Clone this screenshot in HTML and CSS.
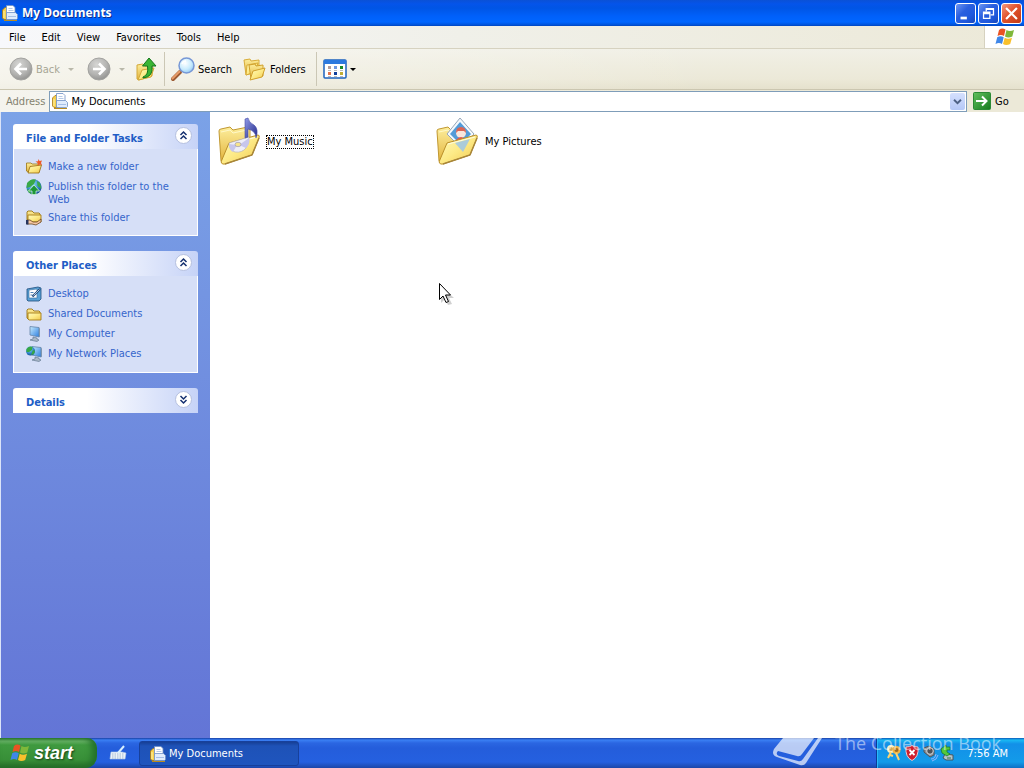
FILE: index.html
```html
<!DOCTYPE html>
<html lang="en">
<head>
<meta charset="utf-8">
<meta name="viewport" content="width=device-width, initial-scale=1">
<title>My Documents</title>
<link rel="stylesheet" href="styles.css">
</head>
<body>
<svg class="defs" aria-hidden="true">
  <defs>
    <linearGradient id="gold" x1="0" y1="0" x2="1" y2="1"><stop offset="0" stop-color="#fffbc0"/><stop offset=".5" stop-color="#fdea86"/><stop offset="1" stop-color="#f0c74c"/></linearGradient>
    <linearGradient id="gold-back" x1="0" y1="0" x2="0" y2="1"><stop offset="0" stop-color="#fdee9c"/><stop offset="1" stop-color="#e2b23a"/></linearGradient>
    <radialGradient id="grey-ball" cx=".4" cy=".3" r=".75"><stop offset="0" stop-color="#d6d6d4"/><stop offset=".6" stop-color="#b4b4b2"/><stop offset="1" stop-color="#8f8f8d"/></radialGradient>
    <radialGradient id="lens" cx=".4" cy=".35" r=".7"><stop offset="0" stop-color="#fff"/><stop offset=".6" stop-color="#c8ebfd"/><stop offset="1" stop-color="#8fc6f2"/></radialGradient>
    <linearGradient id="green" x1="0" y1="0" x2="1" y2="1"><stop offset="0" stop-color="#62c05e"/><stop offset="1" stop-color="#157a1d"/></linearGradient>
    <radialGradient id="globe" cx=".4" cy=".3" r=".8"><stop offset="0" stop-color="#8fe0f5"/><stop offset=".6" stop-color="#2d7fc8"/><stop offset="1" stop-color="#123f7e"/></radialGradient>
    <linearGradient id="screen" x1="0" y1="0" x2="1" y2="1"><stop offset="0" stop-color="#c9ecff"/><stop offset="1" stop-color="#2c7fe0"/></linearGradient>
    <linearGradient id="note" x1="0" y1="0" x2="1" y2="1"><stop offset="0" stop-color="#8f9ae6"/><stop offset="1" stop-color="#252b8c"/></linearGradient>
  </defs>
  <symbol id="docs" viewBox="0 0 16 16">
    <path d="M.5 5L3 2.500h3v12H2L.5 13z" fill="#f7cf4a" stroke="#a87a16" stroke-width=".8"/>
    <path d="M2 6v7" stroke="#fff3a8"/>
    <path d="M4.500.5h6.500l2 2V9H4.500z" fill="#fff" stroke="#6f8fc4" stroke-width=".8"/>
    <path d="M6.500 3.500h4M6.500 5.500h5" stroke="#b6c9e6"/>
    <path d="M4.500 7.500h9l2 2v4l-1 1h-10z" fill="#dfebfc" stroke="#6f8fc4" stroke-width=".8"/>
    <path d="M6 11.500h8" stroke="#a5bfe6"/>
    <path d="M2 15.500h13" stroke="#b98b20"/>
  </symbol>
  <symbol id="folder" viewBox="0 0 16 16">
    <path d="M1 4l1-1h4l2 2h5l1 1v7H2l-1-1z" fill="url(#gold-back)" stroke="#9b7412" stroke-width=".9"/>
    <path d="M2 7h13v7H3L2 13z" fill="url(#gold)" stroke="#a67d19" stroke-width=".9"/>
  </symbol>
  <symbol id="open-folder" viewBox="0 0 16 16">
    <path d="M.5 4h4.500l1 1h7v8H2L.5 12z" fill="url(#gold-back)" stroke="#9b7412" stroke-width=".8"/>
    <path d="M4 7.500L15.500 6 13 14H2z" fill="url(#gold)" stroke="#94690e" stroke-width=".8"/>
  </symbol>
  <symbol id="flag" viewBox="0 0 20 20">
    <path d="M4 3q3-2.500 6.500-.5L9 9q-3-2-6.500 0z" fill="#ea5323"/>
    <path d="M11.500 3q3 2 7.500 0L17.300 9.500q-4 2-7.300 0z" fill="#7fb83a"/>
    <path d="M2.200 10.200q3.300-2 6.500 0L7 17q-3-2-6.500 0z" fill="#3f87e8"/>
    <path d="M9.700 10.700q3.300 2 7.300 0L15.200 17q-4 2-7.200 0z" fill="#f9c02c"/>
  </symbol>
  <symbol id="monitor" viewBox="0 0 16 16">
    <path d="M4 .5l9 1v9.500l-9-2z" fill="url(#screen)" stroke="#6384a9" stroke-width=".8"/>
    <path d="M13 1.500l1 1v8l-1 1z" fill="#7f95ad"/>
    <path d="M7 11l4 1v1l2 1-2 1.500-7-1.500 3-1z" fill="#aab8c8" stroke="#586e86" stroke-width=".6"/>
  </symbol>
  <symbol id="big-folder" viewBox="0 0 44 48">
    <path d="M1 13q0-2 2-2l9-2 3 3 15-3q2 0 2 3v20L7 45l-4-2z" fill="url(#gold-back)" stroke="#c19831"/>
    <path d="M3 14l9-2 3 3 14-3" fill="none" stroke="#fff8c8"/>
  </symbol>
  <symbol id="big-front" viewBox="0 0 44 48">
    <path d="M11 25l29-8q2 0 1 3l-7 17-27 9q-3 1-4-2z" fill="url(#gold)" stroke="#bb902a"/>
    <path d="M12 26l27-7" stroke="#fffce0"/>
    <path d="M7 46l27-9 7-17" fill="none" stroke="#a8863a" stroke-width="1.500"/>
  </symbol>
</svg>

<header class="titlebar">
  <svg class="icon16"><use href="#docs"/></svg>
  <h1 class="title">My Documents</h1>
  <button class="winbtn" aria-label="Minimize"><svg viewBox="0 0 21 21"><path d="M5 14h7v3H5z" fill="#fff"/></svg></button>
  <button class="winbtn" aria-label="Restore"><svg viewBox="0 0 21 21" fill="none" stroke="#fff" stroke-width="1.400"><path d="M8 8V5h8v7h-3M8 6h8M5 9h7v7H5zM5 10.500h7"/></svg></button>
  <button class="winbtn close" aria-label="Close"><svg viewBox="0 0 21 21"><path d="M4.500 4.500l12 12M16.500 4.500l-12 12" stroke="#fff" stroke-width="2.400"/></svg></button>
</header>

<nav class="menubar" aria-label="Menu">
  <button class="menu">File</button>
  <button class="menu">Edit</button>
  <button class="menu">View</button>
  <button class="menu">Favorites</button>
  <button class="menu">Tools</button>
  <button class="menu">Help</button>
  <span class="brand"><svg class="icon20"><use href="#flag"/></svg></span>
</nav>

<div class="toolbar" role="toolbar" aria-label="Standard buttons">
  <button class="tool back" disabled>
    <svg class="icon24" viewBox="0 0 24 24"><circle cx="12" cy="12" r="11" fill="url(#grey-ball)" stroke="#a3a3a0"/><path d="M18 12H7M12 6.500L6.500 12l5.500 5.500" fill="none" stroke="#fff" stroke-width="2.600"/></svg>
    Back <i class="caret"></i>
  </button>
  <button class="tool forward" disabled aria-label="Forward">
    <svg class="icon24" viewBox="0 0 24 24"><circle cx="12" cy="12" r="11" fill="url(#grey-ball)" stroke="#a3a3a0"/><path d="M6 12h11M12 6.500l5.500 5.500-5.500 5.500" fill="none" stroke="#fff" stroke-width="2.600"/></svg>
    <i class="caret"></i>
  </button>
  <button class="tool up" aria-label="Up">
    <svg class="icon24" viewBox="0 0 24 24"><path d="M3 8l6-1 2 2 7-1v11L5 23l-2-1z" fill="url(#gold-back)" stroke="#d3a838"/><path d="M8 13l12-2-3 9L4 23z" fill="url(#gold)" stroke="#d3a838"/><path d="M9 20q6-2 4.500-11H8.500L15 1l7 8h-4q1.500 11-9 12z" fill="#3bb534" stroke="#14751a"/></svg>
  </button>
  <span class="rule"></span>
  <button class="tool search">
    <svg class="icon24" viewBox="0 0 24 24"><path d="M9 15l-7 7" stroke="#9c5a32" stroke-width="4" stroke-linecap="round"/><path d="M8.500 14.500l-7 7" stroke="#e79c6a" stroke-width="2" stroke-linecap="round"/><circle cx="15.500" cy="8.500" r="7.500" fill="url(#lens)" stroke="#7798d6" stroke-width="1.500"/><path d="M11 7q1-3 4-3" fill="none" stroke="#fff" stroke-width="1.500"/></svg>
    Search
  </button>
  <button class="tool folders">
    <svg class="icon24" viewBox="0 0 24 24"><path d="M1 3l6-1 1 2 8-1v11L3 18z" fill="url(#gold-back)" stroke="#d8ac38"/><path d="M4 8l11-2-3 9-9 3z" fill="url(#gold)" stroke="#d8ac38"/><path d="M6 8l6-1 1 2 7-1v11L8 22z" fill="url(#gold-back)" stroke="#d0a02c"/><path d="M10 14l12-3-3 9-12 3z" fill="url(#gold)" stroke="#d0a02c"/></svg>
    Folders
  </button>
  <span class="rule"></span>
  <button class="tool views" aria-label="Views">
    <svg class="icon24" viewBox="0 0 24 24"><rect x="1" y="3" width="22" height="18" rx="1" fill="#fff" stroke="#1c62bd" stroke-width="1.500"/><path d="M1 3h22v4H1z" fill="#2b79df"/><path d="M5 9h3v3H5z" fill="#b09b9b"/><path d="M11 9h3v3h-3z" fill="#6d98e2"/><path d="M17 9h3v3h-3z" fill="#198a27"/><path d="M5 15h3v3H5z" fill="#e1714b"/><path d="M11 15h3v3h-3z" fill="#123e9a"/><path d="M17 15h3v3h-3z" fill="#c0ad33"/><path d="M5 13.500h3m3 0h3m3 0h3M5 19.500h3m3 0h3m3 0h3" stroke="#bbb"/></svg>
    <i class="caret dark"></i>
  </button>
</div>

<form class="addressbar" onsubmit="return false">
  <label for="address">Address</label>
  <span class="combo">
    <svg class="icon16"><use href="#docs"/></svg>
    <input id="address" type="text" value="My Documents">
    <button class="drop" type="button" aria-label="Show addresses"><svg viewBox="0 0 15 17"><path d="M3.500 6.500l4 4 4-4" fill="none" stroke="#4d6185" stroke-width="2.200"/></svg></button>
  </span>
  <button class="go" type="submit"><svg viewBox="0 0 18 18"><rect x=".5" y=".5" width="17" height="17" rx="1" fill="url(#green)" stroke="#2b8a35"/><path d="M3 9h10M9 4.500L13.500 9 9 13.500" fill="none" stroke="#fff" stroke-width="2"/></svg>Go</button>
</form>

<div class="content">
  <aside class="side">
    <section class="group">
      <button class="group-head" aria-expanded="true">File and Folder Tasks
        <svg class="chev" viewBox="0 0 17 17"><circle cx="8.500" cy="8.500" r="8" fill="#fff" stroke="#b5c0df"/><path d="M5.500 8l3-3 3 3M5.500 12l3-3 3 3" fill="none" stroke="#15306f" stroke-width="1.500"/></svg></button>
      <div class="group-body">
        <a class="task" href="#new"><svg class="icon16" viewBox="0 0 16 16"><use href="#open-folder"/><path d="M12.500 0l1 2 2.500-.5L15 4l1 2-3-.5L11.500 7l.2-3L9.500 2.500l2.500-.3z" fill="#ee5a28"/></svg><span>Make a new folder</span></a>
        <a class="task" href="#publish"><svg class="icon16" viewBox="0 0 16 16"><circle cx="8" cy="8" r="7.600" fill="url(#globe)"/><path d="M1 4q4-5 9-3.500L8 5 4 8 .5 9zM11 2l3 2 1.500 6-4-3zM1 10l3 1 2 4.500Q2 14 1 10z" fill="#39a847"/><path d="M8 6l5.500 6H10v3.500H6V12H2.500z" fill="#1d9638" stroke="#e1fbe2" stroke-width=".7"/></svg><span>Publish this folder to the Web</span></a>
        <a class="task" href="#share"><svg class="icon16" viewBox="0 0 16 16"><use href="#folder" y="-2"/><path d="M1 10h3l3 2h4l4-3v3l-5 3-4-1H1z" fill="#f6c7a3" stroke="#69451f" stroke-width=".8"/><path d="M0 10h2.500v4.500H0z" fill="#27345d"/></svg><span>Share this folder</span></a>
      </div>
    </section>
    <section class="group">
      <button class="group-head" aria-expanded="true">Other Places
        <svg class="chev" viewBox="0 0 17 17"><circle cx="8.500" cy="8.500" r="8" fill="#fff" stroke="#b5c0df"/><path d="M5.500 8l3-3 3 3M5.500 12l3-3 3 3" fill="none" stroke="#15306f" stroke-width="1.500"/></svg></button>
      <div class="group-body places">
        <a class="task" href="#desktop"><svg class="icon16" viewBox="0 0 16 16"><path d="M1 3l11-2 3 1v11l-2 2H2l-1-1z" fill="#5aa2d6" stroke="#1e4c7c" stroke-width=".8"/><path d="M3 4l8-1v9H3z" fill="#fff" stroke="#386d9e" stroke-width=".6"/><path d="M4.500 6.500h3M4.500 9h2" stroke="#4c83b5"/><path d="M6.500 10.500L14 3" stroke="#1d4475" stroke-width="2"/><path d="M7.500 9.500l6-6" stroke="#d7efff" stroke-width=".8"/></svg><span>Desktop</span></a>
        <a class="task" href="#shared"><svg class="icon16"><use href="#folder"/></svg><span>Shared Documents</span></a>
        <a class="task" href="#computer"><svg class="icon16"><use href="#monitor"/></svg><span>My Computer</span></a>
        <a class="task" href="#network"><svg class="icon16" viewBox="0 0 16 16"><use href="#monitor" x="2" width="16" height="16"/><circle cx="4.500" cy="5" r="4.500" fill="url(#globe)"/><path d="M.5 3q3-3.500 6-2L6 4 3 6 .5 6zM7 4l2 1-1 3-3 1z" fill="#36a845"/></svg><span>My Network Places</span></a>
      </div>
    </section>
    <section class="group">
      <button class="group-head" aria-expanded="false">Details
        <svg class="chev" viewBox="0 0 17 17"><circle cx="8.500" cy="8.500" r="8" fill="#fff" stroke="#b5c0df"/><path d="M5.500 5l3 3 3-3M5.500 9l3 3 3-3" fill="none" stroke="#15306f" stroke-width="1.500"/></svg></button>
    </section>
  </aside>

  <main class="files">
    <a class="file" href="#music">
      <svg class="icon48" viewBox="0 0 44 48"><use href="#big-folder"/><use href="#big-front"/><path d="M11 25l20-6q1 6-3 11t-11 4q-6-2-6-9z" fill="#eeeef8" stroke="#b9b4b4" stroke-width=".7"/><path d="M19 27l-8-1q0 6 4 8zM21 27l10-7q1 6-3 10z" fill="#c7c6ec"/><ellipse cx="20" cy="26.500" rx="3" ry="2.200" fill="#f6e58d" stroke="#9c96bd" stroke-width=".7"/><path d="M27 1l3-1q1 5 6 7 5 4 2 13 0-7-8-9v8l-3 1z" fill="url(#note)" stroke="#444ba5" stroke-width=".6"/></svg>
      <span class="name focused">My Music</span>
    </a>
    <a class="file" href="#pictures">
      <svg class="icon48" viewBox="0 0 44 48"><use href="#big-folder"/><path d="M24 0l14 16-13 14-14-14z" fill="#f4f9fd" stroke="#98a7b8"/><path d="M24 4l11 12-10 11-11-11z" fill="#539bd8"/><circle cx="25" cy="15" r="5" fill="#f9e5dc"/><path d="M20 15q0-6 5-6t5 6l-2-2h-6z" fill="#da6555"/><path d="M20 22q5-6 10 0l-5 5z" fill="#e4574e"/><use href="#big-front"/><path d="M19 25l15-4-7 13z" fill="#9cc5e6" opacity=".85"/></svg>
      <span class="name">My Pictures</span>
    </a>
    <svg class="pointer" viewBox="0 0 16 24"><path d="M3 4v17l4-4 3 6 4-1-3-6h5z" fill="#777" opacity=".35"/><path d="M1.500 1.500v16l3.500-3.500 3 6.500 2.500-1-3-6.500h5z" fill="#fff" stroke="#000"/></svg>
  </main>
</div>

<footer class="taskbar">
  <button class="start"><svg class="icon20"><use href="#flag"/></svg>start</button>
  <button class="quick" aria-label="Language bar"><svg class="icon16" viewBox="0 0 16 16"><path d="M1 7h11l4 1-1 6H0z" fill="#eef3f8" stroke="#b3cbe6" stroke-width=".6"/><path d="M2 9h12M2 11h12M2 13h12" stroke="#8aa8c8" stroke-width=".8" stroke-dasharray="1.500 1"/><path d="M8 8l6-7" stroke="#d8f0ff" stroke-width="2"/></svg></button>
  <button class="window"><svg class="icon16"><use href="#docs"/></svg>My Documents</button>
  <div class="tray">
    <svg class="icon16" viewBox="0 0 16 16"><circle cx="5" cy="4" r="3" fill="#d2a653" stroke="#f9efc4" stroke-width="2"/><circle cx="10.500" cy="5" r="3" fill="#9a6a22" stroke="#f2b544" stroke-width="2"/><path d="M5 7l-3 6M10 8l3 7M4 10l3 1" stroke="#ffd46e" stroke-width="2"/></svg>
    <svg class="icon16" viewBox="0 0 16 16"><path d="M2 2q4 0 6-1.500Q10 2 14 2q1 10-6 13.500Q1 12 2 2z" fill="#cf1f2e" stroke="#eec5cc"/><path d="M5.500 5l5 5m0-5l-5 5" stroke="#fff" stroke-width="1.800"/></svg>
    <svg class="icon16" viewBox="0 0 16 16"><path d="M2 3l5-2 5 3v6l-4 2-6-5z" fill="#8c9297" stroke="#4e545a"/><circle cx="8" cy="6" r="3.300" fill="#4d5359" stroke="#d7d9da"/><path d="M9 14q4 0 5-5M10 16q5-1 6-6" fill="none" stroke="#9fb9ff" stroke-width=".9"/></svg>
    <svg class="icon16" viewBox="0 0 16 16"><path d="M5 9l8 1v5H6l-3-2z" fill="#b5c3ca" stroke="#46565f"/><path d="M7 13h4" stroke="#347b42"/><path d="M1 4l5-4v2h4v3H7v2l3 2-3 2-5-3z" fill="#54c83a" stroke="#17722a" stroke-width=".7"/></svg>
    <time class="clock">7:56 AM</time>
  </div>
</footer>

<div class="watermark">
  <svg class="book" viewBox="0 0 50 32"><path fill-rule="evenodd" d="M10 2L1 13q-3 6 3 8l23 8q4 1 6-2L49 2zM5 15q-3 3 1 5l19 5q3 1 5-2L45 2h-4L29 18q-2 3-5 2z"/></svg>
  <span>The Collection Book</span>
</div>
</body>
</html>
```
FILE: styles.css
```css
* { box-sizing: border-box; }

body {
  margin: 0;
  min-height: 100vh;
  display: flex;
  flex-direction: column;
  position: relative;
  background: #fff;
  color: #000;
  font: 11px/13px "DejaVu Sans Condensed", Tahoma, "DejaVu Sans", sans-serif;
}

button, input { font: inherit; color: inherit; margin: 0; padding: 0; border: 0; background: none; }
button { display: flex; align-items: center; }
a { color: inherit; text-decoration: none; }
svg { flex: none; display: block; overflow: visible; }
.defs { position: absolute; width: 0; height: 0; }
.icon16 { width: 16px; height: 16px; }
.icon20 { width: 20px; height: 20px; }
.icon24 { width: 24px; height: 24px; }
.icon48 { width: 44px; height: 48px; }

/* Title bar */
.titlebar {
  display: flex;
  align-items: center;
  gap: 2px;
  height: 26px;
  padding: 0 2px;
  background: linear-gradient(#0a51d6 0, #0454ea 4px, #0055e5 8px, #0060fa 16px, #0066ff 22px, #0052d8 25px, #0144bb);
}
.title {
  flex: 1;
  margin: 0 0 0 2px;
  color: #fff;
  font: bold 12px/16px "Open Sans", "Noto Sans", sans-serif;
  text-shadow: 1px 1px #0b2d8c;
}
.winbtn {
  width: 21px;
  height: 21px;
  border: 1px solid #fff;
  border-radius: 3px;
  background: linear-gradient(135deg, #6d96f3, #2a5fdf 40%, #2059dd 70%, #1748bb);
}
.winbtn svg { width: 19px; height: 19px; }
.winbtn.close { background: linear-gradient(135deg, #f2997e, #e2532d 45%, #c13b18); }

/* Menu bar */
.menubar {
  display: flex;
  align-items: stretch;
  height: 23px;
  padding-left: 1px;
  background: linear-gradient(90deg, #f7f8fb, #f0f0e9 45%, #ece9d8);
  border-bottom: 1px solid #d6d2c0;
}
.menu { padding: 0 8px; }
.brand {
  display: flex;
  align-items: center;
  justify-content: center;
  width: 40px;
  margin-left: auto;
  background: #fff;
  border-left: 1px solid #d6d2c0;
}

/* Toolbar */
.toolbar {
  display: flex;
  align-items: center;
  height: 41px;
  padding-left: 9px;
  background: linear-gradient(90deg, rgba(255,255,255,.5), rgba(236,233,216,0) 70%), linear-gradient(#f1f0e6, #ece9d8 75%, #e5e1cd);
  border-bottom: 1px solid #cbc6b0;
}
.tool { gap: 3px; }
.tool:disabled { color: #a7a695; }
.back { margin-right: 13px; }
.back .caret { margin-left: 5px; }
.forward { gap: 8px; margin-right: 9px; }
.rule { align-self: stretch; width: 1px; margin: 3px 6px; background: #cbc7b5; }
.folders { margin-left: 11px; margin-right: 4px; }
.caret {
  border: 3px solid transparent;
  border-top-color: #b9b8aa;
  border-bottom: 0;
}
.caret.dark { border-top-color: #000; }

/* Address bar */
.addressbar {
  display: flex;
  align-items: center;
  height: 22px;
  padding-left: 6px;
  background: linear-gradient(90deg, #f5f4ee, #ece9d8 70%);
}
.addressbar label { color: #84826f; }
.combo {
  display: flex;
  align-items: center;
  flex: 1;
  gap: 3px;
  height: 21px;
  margin-left: 4px;
  padding: 0 1px 0 2px;
  background: #fff;
  border: 1px solid #7f9db9;
}
.combo input { flex: 1; min-width: 0; height: 17px; outline: 0; }
.drop {
  justify-content: center;
  width: 15px;
  height: 17px;
  border-radius: 2px;
  background: linear-gradient(#d5e0fd, #b5c8f7);
}
.drop svg { width: 13px; height: 15px; }
.go { gap: 4px; width: 51px; margin-left: 6px; }
.go svg { width: 18px; height: 18px; }

/* Window content */
.content { display: flex; flex: 1; }
.side {
  display: flex;
  flex-direction: column;
  gap: 15px;
  width: 210px;
  padding: 12px;
  border-left: 1px solid #dbe4f8;
  background: linear-gradient(#7ba2e7, #6375d6);
}
.group-head {
  justify-content: space-between;
  width: 100%;
  height: 25px;
  padding: 3px 6px 0 13px;
  border-radius: 3px 3px 0 0;
  background: linear-gradient(90deg, #fff 40%, #c6d3f7);
  color: #215dc6;
  font-weight: bold;
  text-align: left;
}
.chev { width: 17px; height: 17px; margin-bottom: 5px; }
.group-body {
  display: flex;
  flex-direction: column;
  gap: 4px;
  padding: 10px 12px 9px;
  border: 1px solid #fff;
  border-top: 0;
  background: #d6dff7;
  color: #3565cb;
}
.places { padding-bottom: 10px; }
.task { display: flex; gap: 6px; min-height: 16px; }
.task span { padding-top: 1px; }

.files {
  position: relative;
  flex: 1;
  display: flex;
  flex-wrap: wrap;
  align-content: flex-start;
  padding: 6px 8px;
}
.file { display: flex; align-items: center; gap: 4px; width: 218px; }
.name { border: 1px solid transparent; line-height: 12px; }
.name.focused { border: 1px dotted #000; }
.pointer { position: absolute; left: 228px; top: 170px; width: 16px; height: 24px; }

/* Taskbar */
.taskbar {
  display: flex;
  align-items: stretch;
  height: 30px;
  color: #fff;
  background: linear-gradient(#1941a5 0, #3a80f4 2px, #2b66e2 5px, #245ddb 10px, #2560e0 24px, #1c46a8);
}
.start {
  gap: 4px;
  width: 97px;
  padding: 0 0 0 10px;
  border-radius: 0 10px 12px 0;
  background: linear-gradient(#2f7a2f 0, #6cb66a 3px, #3f9a3f 7px, #388f38 22px, #266b27);
  box-shadow: inset -5px 0 6px #23712a;
  font: italic bold 18px/20px "Liberation Sans", Arial, sans-serif;
  text-shadow: 1px 1px 2px #173f17;
}
.quick { width: 42px; padding-left: 13px; }
.window {
  gap: 3px;
  width: 160px;
  margin: 3px 0 2px;
  padding-left: 10px;
  border: 1px solid #17409b;
  border-radius: 3px;
  background: linear-gradient(#163f95, #1e52b7 4px, #1f55be);
}
.tray {
  display: flex;
  align-items: center;
  gap: 2px;
  margin-left: auto;
  padding: 0 16px 0 9px;
  border-left: 1px solid #0c3b97;
  background: linear-gradient(#0c59b9 0, #19b9f3 2px, #1290e8 6px, #139be9 24px, #0e6fc4);
  box-shadow: inset 1px 0 #29b9fb;
}
.clock { margin-left: 9px; }

.watermark {
  position: absolute;
  right: 23px;
  bottom: 0;
  display: flex;
  gap: 12px;
  height: 32px;
  pointer-events: none;
  color: rgba(255, 255, 255, .5);
  font: 18px/14px "Open Sans", "Noto Sans", sans-serif;
}
.book { width: 50px; height: 32px; fill: rgba(255, 255, 255, .68); }
```
